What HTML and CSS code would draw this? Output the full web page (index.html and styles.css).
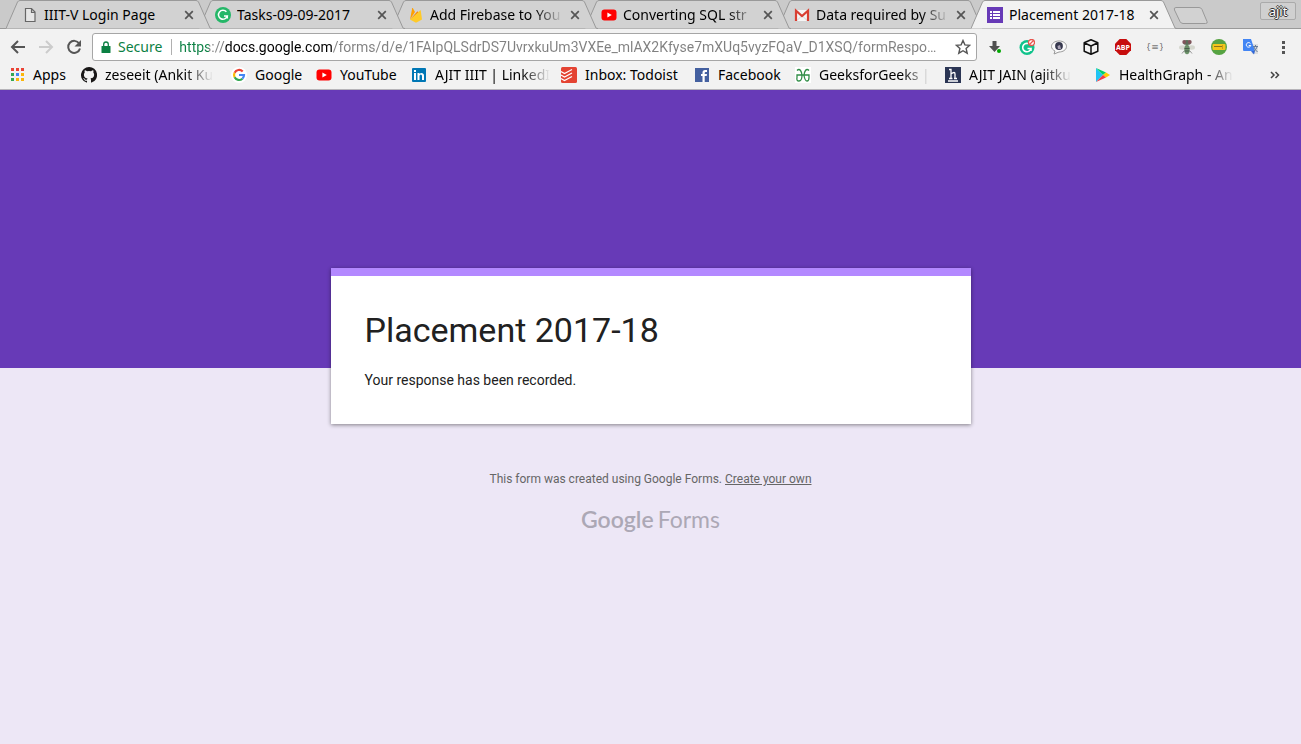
FILE: index.html
```html
<!DOCTYPE html>
<html lang="en">
<head>
<meta charset="utf-8">
<title>Placement 2017-18</title>
<link rel="stylesheet" href="styles.css">
</head>
<body>
<svg class="defs" aria-hidden="true">
  <defs>
    <symbol id="shape" viewBox="0 0 206 29"><path d="M0 28.500L11.500 2Q12.500 .5 14 .5H190Q191.500 .5 192.500 2L204 28Q204.500 28.500 206 28.500"/></symbol>
    <symbol id="close" viewBox="0 0 10 10"><path d="M1.200 1.200 8.800 8.800M8.800 1.200 1.200 8.800" fill="none" stroke="#555" stroke-width="1.700"/></symbol>
    <symbol id="youtube" viewBox="0 0 16 16"><rect x="0.500" y="2.500" width="15" height="11" rx="3" fill="#f00"/><path d="M6.400 5.400v5.200L10.800 8z" fill="#fff"/></symbol>
  </defs>
</svg>

<header class="browser">
  <div class="strip">
    <nav class="tabs" aria-label="Open tabs">
      <div class="tab">
        <svg class="tab-shape"><use href="#shape"/></svg>
        <svg class="icon" viewBox="0 0 16 16"><path d="M3.500 1.500h6l3.500 3.500v9.500H3.500zM9.500 1.500v4h3.500" fill="#e6e6e6" stroke="#666" stroke-width="1.200"/></svg>
        <a class="tab-title" href="#">IIIT-V Login Page</a>
        <button class="close" aria-label="Close tab"><svg><use href="#close"/></svg></button>
      </div>
      <div class="tab">
        <svg class="tab-shape"><use href="#shape"/></svg>
        <svg class="icon" viewBox="0 0 16 16"><circle cx="8" cy="8" r="8" fill="#25b768"/><path d="M11.400 4.800A4.500 4.500 0 1 0 12.300 9H9M12.300 8.800v2.700" fill="none" stroke="#fff" stroke-width="1.500"/></svg>
        <a class="tab-title" href="#">Tasks-09-09-2017</a>
        <button class="close" aria-label="Close tab"><svg><use href="#close"/></svg></button>
      </div>
      <div class="tab">
        <svg class="tab-shape"><use href="#shape"/></svg>
        <svg class="icon" viewBox="0 0 16 16"><path d="M2 12.500 4.200 1.300c.1-.4.500-.4.700-.1L7 5z" fill="#ffa000"/><path d="M2 12.500 9.500 4.200 11 6.500z" fill="#f57c00"/><path d="M2 12.500 12 3.500c.3-.3.700-.1.800.2L14 12.500l-5.500 3c-.4.200-.7.200-1 0z" fill="#ffca28"/></svg>
        <a class="tab-title fade" href="#">Add Firebase to You</a>
        <button class="close" aria-label="Close tab"><svg><use href="#close"/></svg></button>
      </div>
      <div class="tab">
        <svg class="tab-shape"><use href="#shape"/></svg>
        <svg class="icon"><use href="#youtube"/></svg>
        <a class="tab-title fade" href="#">Converting SQL str</a>
        <button class="close" aria-label="Close tab"><svg><use href="#close"/></svg></button>
      </div>
      <div class="tab">
        <svg class="tab-shape"><use href="#shape"/></svg>
        <svg class="icon" viewBox="0 0 16 16"><path d="M1 3h14v11H1z" fill="#f5f5f5"/><path d="m3 13.500 5-5 5 5" fill="none" stroke="#d5d5d5"/><path d="M2 14V3.700L8 9l6-5.300V14" fill="none" stroke="#d93f32" stroke-width="2.200"/></svg>
        <a class="tab-title fade" href="#">Data required by Su</a>
        <button class="close" aria-label="Close tab"><svg><use href="#close"/></svg></button>
      </div>
      <div class="tab active">
        <svg class="tab-shape"><use href="#shape"/></svg>
        <svg class="icon" viewBox="0 0 16 16"><path d="M0 0h16v16H0z" fill="#673ab7"/><path d="M3 4h2v2H3zm3 0h7v2H6zM3 7h2v2H3zm3 0h7v2H6zM3 10h2v2H3zm3 0h7v2H6z" fill="#fff"/></svg>
        <a class="tab-title" href="#" aria-current="page">Placement 2017-18</a>
        <button class="close" aria-label="Close tab"><svg><use href="#close"/></svg></button>
      </div>
    </nav>
    <button class="new-tab" aria-label="New tab"><svg viewBox="0 0 36 18"><path d="M3 .5h23q2 0 3 2l5 12q1 2-1.500 2H10q-2 0-3-2L1.500 3Q.5.5 3 .5z" fill="#d2d2d2" stroke="#999"/></svg></button>
    <button class="profile">ajit</button>
  </div>

  <div class="toolbar">
    <button class="nav-button" aria-label="Back"><svg viewBox="0 0 16 16"><path d="M15 8H2.500M8 2 2 8l6 6" fill="none" stroke="#555" stroke-width="2"/></svg></button>
    <button class="nav-button" aria-label="Forward" disabled><svg viewBox="0 0 16 16"><path d="M1 8h12.500M8 2l6 6-6 6" fill="none" stroke="#ccc" stroke-width="2"/></svg></button>
    <button class="nav-button" aria-label="Reload"><svg viewBox="0 0 16 16"><path d="M13.200 4.500A6 6 0 1 0 14 9.500" fill="none" stroke="#555" stroke-width="2"/><path d="M15 1v6.500H8.500z" fill="#555"/></svg></button>
    <form class="address">
      <svg class="lock" viewBox="0 0 10 12"><path d="M1 5h8q.5 0 .5.500v6q0 .5-.5.500H1q-.5 0-.5-.5v-6Q.5 5 1 5z" fill="#0b8043"/><path d="M2.700 5.500V3.300a2.300 2.300 0 0 1 4.600 0v2.200" fill="none" stroke="#0b8043" stroke-width="1.300"/></svg>
      <label class="secure" for="url">Secure</label>
      <input class="url" id="url" type="text" value="https://docs.google.com/forms/d/e/1FAIpQLSdrDS7UvrxkuUm3VXEe_mlAX2Kfyse7mXUq5vyzFQaV_D1XSQ/formRespo…">
      <button class="star" type="button" aria-label="Bookmark this page"><svg viewBox="0 0 16 16"><path d="m8 1.500 1.900 4.400 4.800.4-3.600 3.200 1.100 4.700L8 11.700l-4.200 2.500 1.100-4.700L1.300 6.300l4.800-.4z" fill="none" stroke="#555" stroke-width="1.400"/></svg></button>
    </form>
    <div class="extensions">
      <button aria-label="Downloads"><svg viewBox="0 0 16 16"><path d="M5.500 2h4v5H13l-5.500 6L2 7h3.500z" fill="#505050"/><circle cx="12" cy="12" r="2" fill="#00a800"/></svg></button>
      <button aria-label="Grammarly"><svg viewBox="0 0 16 16"><circle cx="8" cy="8.500" r="7.500" fill="#10c38b"/><path d="M9 4.500A4.200 4.200 0 1 0 12 9.500H8.500M12 9.300V12" fill="none" stroke="#fff" stroke-width="1.600"/><circle cx="12.500" cy="3.500" r="3" fill="#fff" stroke="#e8554e" stroke-width="1.300"/><path d="m10.500 5.500 4-4" stroke="#e8554e" stroke-width="1.300"/></svg></button>
      <button aria-label="Chat"><svg viewBox="0 0 16 16"><path d="M8 2c4.200 0 7.500 2.300 7.500 5.500S12 13 8 13L3 15l1-3C2 11 .5 9.500.5 7.500.5 4.300 3.800 2 8 2z" fill="#fafafa" stroke="#999"/><circle cx="8" cy="7" r="3.900" fill="#36384e"/><path d="m6.500 7 2.500-1 1 4H7z" fill="#a9a1b4"/></svg></button>
      <button aria-label="Package"><svg viewBox="0 0 16 16"><path d="m8 .8 6.800 3v8.400L8 15.300l-6.800-3.100V3.800zM1.200 3.800 8 7l6.800-3.200M8 7v8" fill="none" stroke="#111" stroke-width="1.500" stroke-linejoin="round"/></svg></button>
      <button class="abp" aria-label="Adblock Plus"><svg viewBox="0 0 16 16"><path d="M4.700 0h6.600L16 4.700v6.600L11.300 16H4.700L0 11.300V4.700z" fill="#c70d0d"/><text x="8" y="11" text-anchor="middle">ABP</text></svg></button>
      <button class="json" aria-label="JSON viewer"><svg viewBox="0 0 16 16"><text x="8" y="11" text-anchor="middle">{≡}</text></svg></button>
      <button aria-label="Bug tracker"><svg viewBox="0 0 16 16"><ellipse cx="3.500" cy="8.500" rx="3.500" ry="2.200" fill="#d5d7ce"/><ellipse cx="12.500" cy="8.500" rx="3.500" ry="2.200" fill="#d5d7ce"/><path d="M5 12l-2 2.500M11 12l2 2.500" stroke="#999"/><ellipse cx="8" cy="10.500" rx="2.700" ry="4.800" fill="#6b9169"/><path d="M5.500 9.500h5M5.500 12h5" stroke="#4a5c4c"/><ellipse cx="8" cy="3.500" rx="4" ry="2.500" fill="#5c6e59"/><circle cx="5.200" cy="3" r="1.900" fill="#80545a"/><circle cx="10.800" cy="3" r="1.900" fill="#80545a"/></svg></button>
      <button aria-label="Tickets"><svg viewBox="0 0 16 16"><circle cx="8" cy="8" r="8" fill="#56a342"/><rect x="1.500" y="5" width="13" height="6" rx="1" fill="#f2c51b"/><path d="M3 7.500h8" stroke="#8b741b"/><path d="M11.500 6v4" stroke="#c99c16"/></svg></button>
      <button aria-label="Translate"><svg viewBox="0 0 16 16"><path d="M6 5h9v10H9z" fill="#dedede"/><path d="M0 0h8l4 12H1q-1 0-1-1z" fill="#4285f4"/><path d="m8 12 3 3.500L12 12z" fill="#3367d6"/><path d="M7.500 4.600A2.300 2.300 0 1 0 7.800 6.500H5.700" fill="none" stroke="#fff"/><path d="M10 7.500h5M12.500 6v1.500M14 8q-1 3-3 4M11 8q1 3 3.500 5" fill="none" stroke="#667c9b"/></svg></button>
      <button aria-label="Menu"><svg viewBox="0 0 16 16"><path d="M7 2h3v3H7zm0 5h3v3H7zm0 5h3v3H7z" fill="#555"/></svg></button>
    </div>
  </div>

  <nav class="bookmarks" aria-label="Bookmarks">
    <a href="#"><svg class="icon" viewBox="0 0 16 16"><path d="M2 1h3v3H2zm5 0h3v3H7zm5 0h3v3h-3z" fill="#ea4335"/><path d="M2 6h3v3H2z" fill="#34a853"/><path d="M7 6h3v3H7z" fill="#4285f4"/><path d="M12 6h3v3h-3zM7 11h3v3H7zm5 0h3v3h-3z" fill="#fbb60b"/><path d="M2 11h3v3H2z" fill="#34a853"/></svg><span>Apps</span></a>
    <a href="#"><svg class="icon" viewBox="0 0 16 16"><path d="M8 0a8 8 0 0 0-2.530 15.590c.4.070.550-.17.550-.38v-1.490c-2.230.480-2.700-.94-2.700-.94-.360-.92-.890-1.170-.890-1.170-.730-.5.050-.49.050-.49.810.060 1.230.830 1.230.830.720 1.230 1.880.870 2.340.670.070-.52.280-.87.510-1.070-1.780-.2-3.640-.89-3.640-3.950 0-.87.310-1.590.820-2.150-.08-.2-.36-1.020.080-2.120 0 0 .67-.22 2.200.820a7.600 7.600 0 0 1 4 0c1.530-1.040 2.200-.82 2.200-.82.440 1.100.160 1.920.080 2.120.510.560.820 1.280.820 2.150 0 3.070-1.870 3.750-3.650 3.950.290.250.540.730.540 1.480v2.200c0 .210.150.460.550.380A8 8 0 0 0 8 0z" fill="#191717"/></svg><span class="fade">zeseeit (Ankit Ku</span></a>
    <a href="#"><svg class="icon" viewBox="0 0 16 16"><circle cx="8" cy="8" r="8" fill="#fff"/><g fill="none" stroke-width="2.200"><path d="M11.700 4.500A5 5 0 0 0 3.600 5.700" stroke="#ea4335"/><path d="M3.600 5.700a5 5 0 0 0 0 4.600" stroke="#fbbc05"/><path d="M3.600 10.300a5 5 0 0 0 7.800 1.400" stroke="#34a853"/><path d="M11.400 11.700A5 5 0 0 0 13 8H8" stroke="#4285f4"/></g></svg><span>Google</span></a>
    <a href="#"><svg class="icon"><use href="#youtube"/></svg><span>YouTube</span></a>
    <a href="#"><svg class="icon" viewBox="0 0 16 16"><rect x="1" y="1" width="14" height="14" rx="1" fill="#0077b5"/><path d="M3 6h2v7H3zM3 3h2v2H3zM6.500 6h2v1q2-2 4 0 .5.700.5 2v4h-2V9q0-1.500-1.200-1.500T8.500 9v4h-2z" fill="#fff"/></svg><span class="fade">AJIT IIIT | LinkedI</span></a>
    <a href="#"><svg class="icon" viewBox="0 0 16 16"><rect width="16" height="16" rx="1.500" fill="#e44332"/><path d="m0 4.500 3.500 2L11 2.500M0 8l3.500 2L11 6M0 11.500l3.500 2 7.500-4" fill="none" stroke="#fff" stroke-width="1.200"/></svg><span>Inbox: Todoist</span></a>
    <a href="#"><svg class="icon" viewBox="0 0 16 16"><path d="M1 1h14v14H1z" fill="#4460a0"/><path d="M8.500 15V9H7V7h1.500V5.500Q8.500 3 11 3h2v2h-1.300q-1 0-1 1v1H13l-.3 2h-2v6z" fill="#fff"/></svg><span>Facebook</span></a>
    <a href="#"><svg class="icon" viewBox="0 0 16 16"><path d="M0 0h16v16H0z" fill="#fff"/><path d="M2 3.500Q4 1.500 5.500 3.500T7 8.500Q6.800 14 4 14T2 10.500V8h12v2.500Q14 14 12 14T9 8.500Q9 5.500 10.500 3.500T14 3.500" fill="none" stroke="#2f8d46" stroke-width="1.300"/></svg><span class="fade">GeeksforGeeks | </span></a>
    <a href="#"><svg class="icon" viewBox="0 0 16 16"><path d="M0 0h16v16H0z" fill="#2b3554"/><path d="M4 2.500h2v9M4 11.500h3.500M6 7q4-3 4 0v4.500M9 11.500h3M3 14h10" fill="none" stroke="#fff" stroke-width="1.300"/></svg><span class="fade">AJIT JAIN (ajitku</span></a>
    <a href="#"><svg class="icon" viewBox="0 0 16 16"><path d="M1 1v14l7-7z" fill="#20c4f4"/><path d="m1 1 10 4.500L8 8z" fill="#00d06b"/><path d="m11 5.500 4 2.500-4 2.500L8 8z" fill="#ffcd00"/><path d="M1 15 8 8l3 2.500z" fill="#f33b47"/></svg><span class="fade">HealthGraph - An</span></a>
    <button class="more" aria-label="More bookmarks"><svg viewBox="0 0 10 8"><path d="m1 1 3 3-3 3M5.500 1l3 3-3 3" fill="none" stroke="#444" stroke-width="1.500"/></svg></button>
  </nav>
</header>

<main class="page">
  <section class="card">
    <h1>Placement 2017-18</h1>
    <p>Your response has been recorded.</p>
  </section>
  <footer class="credits">
    <p>This form was created using Google Forms. <a href="#">Create your own</a></p>
    <div class="logo"><b>Google</b><span>Forms</span></div>
  </footer>
</main>
</body>
</html>
```
FILE: styles.css
```css
* { box-sizing: border-box; }

body {
  margin: 0;
  min-height: 100vh;
  display: flex;
  flex-direction: column;
  background: #ede7f6;
  font-family: Roboto, sans-serif;
}

button {
  border: 0;
  padding: 0;
  background: none;
  font: inherit;
}

a { color: inherit; text-decoration: none; }
svg { display: block; }
.defs { position: absolute; width: 0; height: 0; }

.browser {
  background: #f2f2f2;
  border-bottom: 1px solid #b6b4b9;
  color: #000;
  font: 14px/20px "Noto Sans", sans-serif;
}

.icon { flex: none; width: 16px; height: 16px; }
.fade { mask-image: linear-gradient(to left, transparent, #000 28px); }

/* Tab strip */
.strip {
  display: flex;
  height: 29px;
  padding: 0 5px 0 6px;
  background: #cacaca;
  box-shadow: inset 0 -1px #999;
}

.tabs { display: flex; flex: 0 1 1171px; min-width: 0; }

.tab {
  position: relative;
  z-index: 0;
  display: flex;
  align-items: center;
  flex: 0 1 206px;
  min-width: 0;
  height: 29px;
  margin-right: -13px;
  padding: 1px 18px 0 16px;
}

.tab:nth-child(1) { z-index: 5; }
.tab:nth-child(2) { z-index: 4; }
.tab:nth-child(3) { z-index: 3; }
.tab:nth-child(4) { z-index: 2; }
.tab:nth-child(5) { z-index: 1; }
.tab.active { z-index: 6; margin-right: 0; }

.tab-shape {
  position: absolute;
  inset: 0;
  z-index: -1;
  width: 100%;
  height: 100%;
  fill: #d2d2d2;
  stroke: #999;
}

.active .tab-shape { fill: #f2f2f2; }

.tab-title {
  flex: 1;
  min-width: 0;
  margin: 0 7px 0 6px;
  overflow: hidden;
  white-space: nowrap;
}

.close svg { width: 10px; height: 10px; }
.new-tab { align-self: flex-start; margin: 7px 0 0 -4px; }
.new-tab svg { width: 36px; height: 18px; }

.profile {
  width: 36px;
  height: 18px;
  margin: 2px 0 0 auto;
  border: 1px solid #aaa;
  border-radius: 2px;
  background: #d0d0d0;
  color: #fff;
  font-size: 13px;
  line-height: 16px;
  text-shadow: 1px 0 #333, -1px 0 #333, 0 1px #333, 0 -1px #333;
}

/* Toolbar */
.toolbar {
  display: flex;
  align-items: center;
  height: 36px;
  padding: 0 10px;
}

.nav-button { margin-right: 12px; }
.nav-button svg, .extensions svg, .star svg { width: 16px; height: 16px; }

.address {
  display: flex;
  align-items: center;
  flex: 1;
  min-width: 0;
  height: 28px;
  margin-right: 10px;
  margin-left: -2px;
  padding: 0 5px 0 8px;
  border: 1px solid #a6a6a6;
  border-radius: 3px;
  background: #fff;
}

.lock { width: 10px; height: 12px; }

.secure {
  margin: 0 0 0 7px;
  padding-right: 9px;
  border-right: 1px solid #b0b0b0;
  color: #0b8043;
  line-height: 16px;
}

.url {
  flex: 1;
  min-width: 0;
  height: 24px;
  padding: 0 0 0 7px;
  border: 0;
  outline: 0;
  background: linear-gradient(to right, #0b8043 0 37px, #808080 37px 53px, #000 53px 160px, #808080 160px);
  background-clip: text;
  color: transparent;
  font: 14px/20px Roboto, sans-serif;
}

.extensions { display: flex; gap: 16px; }
.abp text { fill: #fff; font: bold 7px "Open Sans", sans-serif; }
.json text { fill: #777; font: 9px "DejaVu Sans", sans-serif; }

/* Bookmarks bar */
.bookmarks {
  display: grid;
  grid-template-columns: 72px 150px 85px 95px 150px 133px 101px 150px 150px 150px 1fr;
  align-items: center;
  height: 24px;
  padding: 0 21px 4px 9px;
}

.bookmarks a {
  display: flex;
  align-items: center;
  gap: 8px;
  min-width: 0;
}

.bookmarks span { white-space: nowrap; }

.more { justify-self: end; }
.more svg { width: 10px; height: 8px; }

/* Form confirmation */
.page {
  flex: 1;
  padding: 178px 16px 16px;
  background: linear-gradient(#673ab7 278px, transparent 278px);
}

.card {
  max-width: 640px;
  margin: 0 auto;
  padding: 32px 34px 34px;
  border-top: 8px solid #b388ff;
  background: #fff;
  box-shadow: 0 1px 4px rgba(0, 0, 0, .45);
  color: #212121;
}

.card h1 {
  margin: 0 0 18px;
  font-size: 34px;
  font-weight: 400;
  line-height: 44px;
}

.card p { margin: 0; font-size: 14px; line-height: 20px; }

.credits {
  margin-top: 46px;
  color: #666;
  font-size: 12px;
  line-height: 18px;
  text-align: center;
}

.credits p { margin: 0; }
.credits a { text-decoration: underline; }

.logo {
  display: flex;
  justify-content: center;
  gap: 4px;
  margin-top: 17px;
  color: #aca8b5;
  font: 23px/28px Lato, sans-serif;
}

.logo b { font-weight: 600; }
```
